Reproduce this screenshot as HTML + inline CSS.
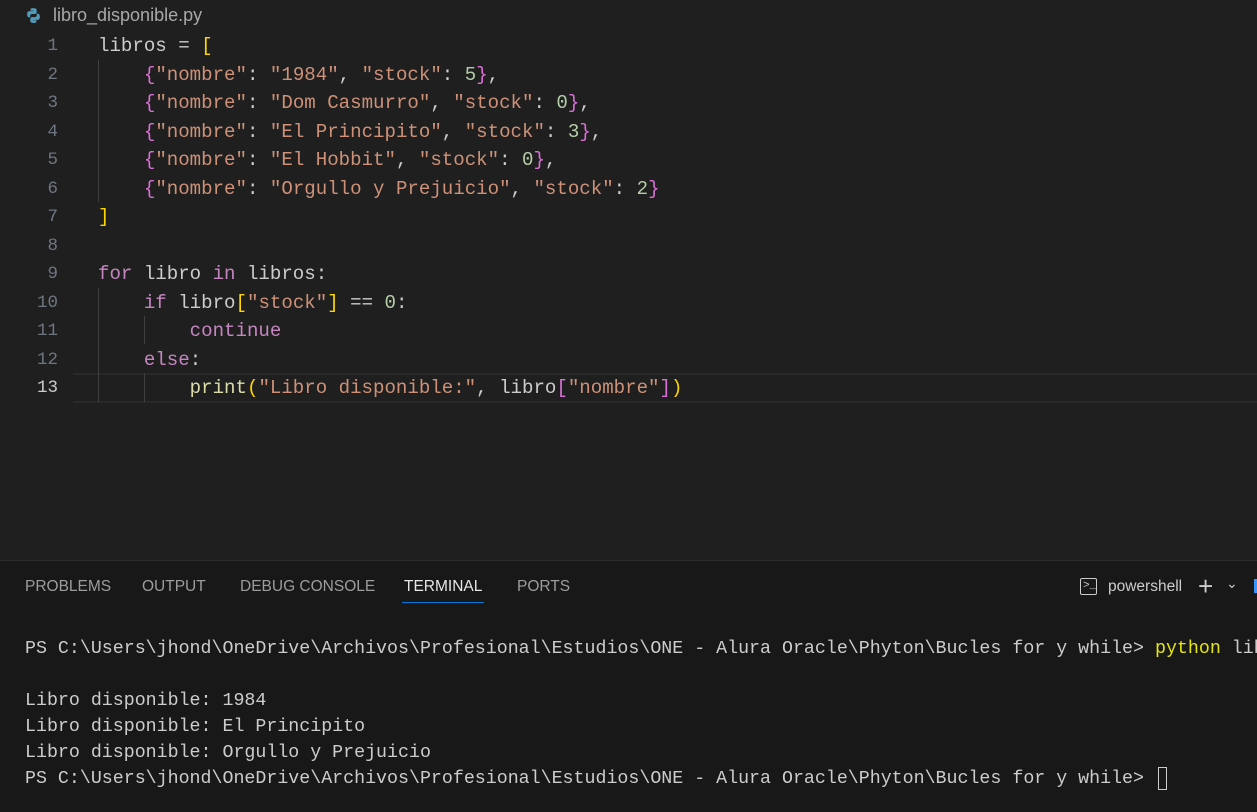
<html><head><style>
body{margin:0;width:1257px;height:811px;background:#1f1f1f;overflow:hidden;position:relative;font-family:"Liberation Mono",monospace;}
.tab{position:absolute;left:53px;top:5px;font:18px "Liberation Sans",sans-serif;color:#a8a8a8;}
.ln{position:absolute;left:0;width:58px;text-align:right;font-size:17.5px;color:#6e7681;}
.cl{position:absolute;left:98px;font-size:19.1px;color:#cccccc;white-space:pre;}
.k{color:#c586c0}.s{color:#ce9178}.n{color:#b5cea8}.y{color:#ffd700}.p{color:#da70d6}.f{color:#dcdcaa}
.g{position:absolute;width:1px;background:#404040;}
.panel{position:absolute;left:0;top:560px;width:1257px;height:251px;background:#181818;border-top:1px solid #2b2b2b;overflow:hidden;}
.pt{position:absolute;top:17px;font:15.5px "Liberation Sans",sans-serif;color:#9d9d9d;}
.t{position:absolute;left:25px;font-size:18.3px;color:#cccccc;white-space:pre;}
</style></head><body>
<svg style="position:absolute;left:25px;top:7px" width="17" height="17" viewBox="0 0 16 16"><path d="M7.8 1C5 1 5.2 2.2 5.2 2.2v1.3h2.7v.4H4.1S2 3.7 2 6.8c0 3.1 1.8 3 1.8 3h1.1V8.4s-.1-1.8 1.8-1.8h2.6s1.7 0 1.7-1.7V2.7S11.3 1 7.8 1z" fill="#519aba"/><path d="M8.2 15c2.8 0 2.6-1.2 2.6-1.2v-1.3H8.1v-.4h3.8s2.1.2 2.1-2.9c0-3.1-1.8-3-1.8-3h-1.1v1.5s.1 1.8-1.8 1.8H6.7s-1.700 0-1.7 1.7v2.2S4.7 15 8.2 15z" fill="#519aba"/></svg>
<div class="tab">libro_disponible.py</div>
<div style="position:absolute;left:73px;top:373px;width:1184px;height:26px;border-top:2px solid #282828;border-bottom:2px solid #282828"></div>
<div class="g" style="left:98px;top:60px;height:142px"></div>
<div class="g" style="left:98px;top:288px;height:114px"></div>
<div class="g" style="left:144px;top:316px;height:28px"></div>
<div class="g" style="left:144px;top:373px;height:29px"></div>
<div class="ln" style="top:36px">1</div><div class="ln" style="top:65px">2</div><div class="ln" style="top:93px">3</div><div class="ln" style="top:122px">4</div><div class="ln" style="top:150px">5</div><div class="ln" style="top:179px">6</div><div class="ln" style="top:207px">7</div><div class="ln" style="top:236px">8</div><div class="ln" style="top:264px">9</div><div class="ln" style="top:293px">10</div><div class="ln" style="top:321px">11</div><div class="ln" style="top:350px">12</div><div class="ln" style="top:378px;color:#cccccc">13</div>
<div class="cl" style="top:35px">libros = <span class="y">[</span></div>
<div class="cl" style="top:64px">    <span class="p">{</span><span class="s">"nombre"</span>: <span class="s">"1984"</span>, <span class="s">"stock"</span>: <span class="n">5</span><span class="p">}</span>,</div>
<div class="cl" style="top:92px">    <span class="p">{</span><span class="s">"nombre"</span>: <span class="s">"Dom Casmurro"</span>, <span class="s">"stock"</span>: <span class="n">0</span><span class="p">}</span>,</div>
<div class="cl" style="top:121px">    <span class="p">{</span><span class="s">"nombre"</span>: <span class="s">"El Principito"</span>, <span class="s">"stock"</span>: <span class="n">3</span><span class="p">}</span>,</div>
<div class="cl" style="top:149px">    <span class="p">{</span><span class="s">"nombre"</span>: <span class="s">"El Hobbit"</span>, <span class="s">"stock"</span>: <span class="n">0</span><span class="p">}</span>,</div>
<div class="cl" style="top:178px">    <span class="p">{</span><span class="s">"nombre"</span>: <span class="s">"Orgullo y Prejuicio"</span>, <span class="s">"stock"</span>: <span class="n">2</span><span class="p">}</span></div>
<div class="cl" style="top:206px"><span class="y">]</span></div>
<div class="cl" style="top:263px"><span class="k">for</span> libro <span class="k">in</span> libros:</div>
<div class="cl" style="top:292px">    <span class="k">if</span> libro<span class="y">[</span><span class="s">"stock"</span><span class="y">]</span> == <span class="n">0</span>:</div>
<div class="cl" style="top:320px">        <span class="k">continue</span></div>
<div class="cl" style="top:349px">    <span class="k">else</span>:</div>
<div class="cl" style="top:377px">        <span class="f">print</span><span class="y">(</span><span class="s">"Libro disponible:"</span>, libro<span class="p">[</span><span class="s">"nombre"</span><span class="p">]</span><span class="y">)</span></div>
<div class="panel">
<div class="pt" style="left:25px">PROBLEMS</div><div class="pt" style="left:142px">OUTPUT</div><div class="pt" style="left:240px">DEBUG CONSOLE</div><div class="pt" style="left:404px;color:#e7e7e7">TERMINAL</div><div class="pt" style="left:517px">PORTS</div>
<div style="position:absolute;left:402px;top:41px;width:82px;height:1px;background:#0078d4"></div>
<div style="position:absolute;left:1080px;top:17px;width:17px;height:17px;border:1px solid #ccc;border-radius:2px;box-sizing:border-box;font:11px 'Liberation Mono';color:#ccc;line-height:14px;padding-left:2px">&gt;_</div>
<div class="pt" style="left:1108px;color:#cccccc">powershell</div>
<div class="pt" style="left:1198px;top:10px;font-size:26px;color:#ccc">+</div>
<div class="pt" style="left:1226px;top:14px;font-size:14px;color:#ccc">⌄</div>
<div style="position:absolute;left:1254px;top:18px;width:3px;height:14px;background:#3794ff"></div>
<div class="t" style="top:78px">PS C:\Users\jhond\OneDrive\Archivos\Profesional\Estudios\ONE - Alura Oracle\Phyton\Bucles for y while&gt; <span style="color:#e5e510">python</span> libro_disponible.py</div>
<div class="t" style="top:130px">Libro disponible: 1984</div>
<div class="t" style="top:156px">Libro disponible: El Principito</div>
<div class="t" style="top:182px">Libro disponible: Orgullo y Prejuicio</div>
<div class="t" style="top:208px">PS C:\Users\jhond\OneDrive\Archivos\Profesional\Estudios\ONE - Alura Oracle\Phyton\Bucles for y while&gt; </div>
<div style="position:absolute;left:1158px;top:206px;width:9px;height:23px;border:1px solid #ccc;box-sizing:border-box"></div>
</div>
</body></html>
